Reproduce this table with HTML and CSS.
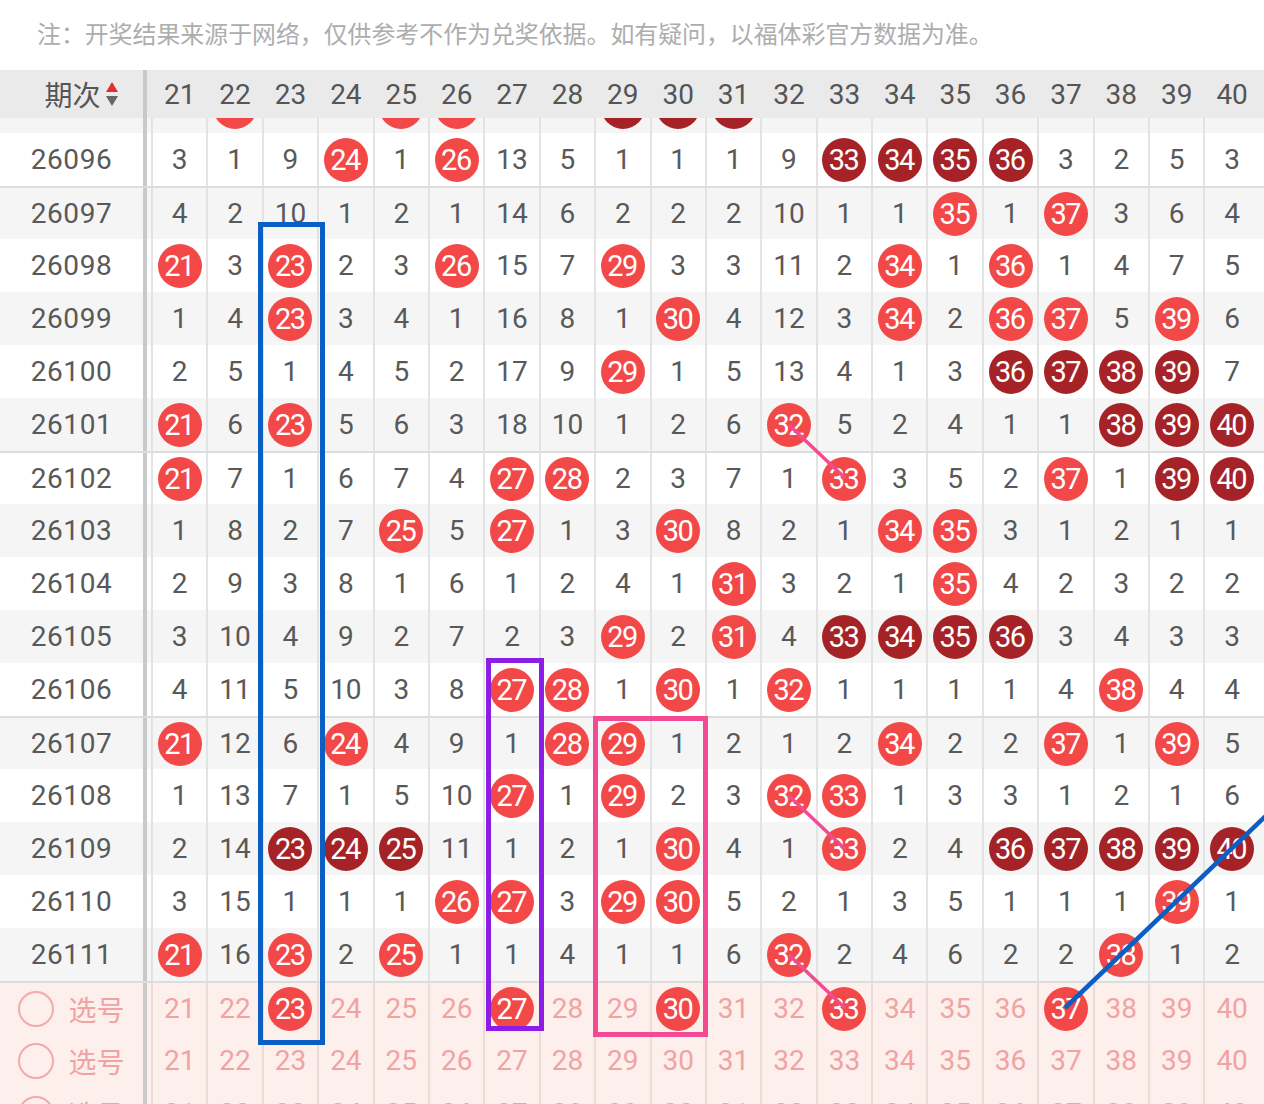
FILE: index.html
```html
<!DOCTYPE html>
<html lang="zh">
<head>
<meta charset="utf-8">
<title>走势图</title>
<link rel="stylesheet" href="styles.css">
</head>
<body>
<div class="page">
  <div class="note">注：开奖结果来源于网络，仅供参考不作为兑奖依据。如有疑问，以福体彩官方数据为准。</div>
  <div class="head">
    <div class="pcol hcol">期次<svg class="sort" width="14" height="28" viewBox="0 0 14 28"><polygon points="7,2 13,12 1,12" fill="#e52b2b"/><polygon points="1,16 13,16 7,26" fill="#666"/></svg></div>
    <span class="c">21</span><span class="c">22</span><span class="c">23</span><span class="c">24</span><span class="c">25</span><span class="c">26</span><span class="c">27</span><span class="c">28</span><span class="c">29</span><span class="c">30</span><span class="c">31</span><span class="c">32</span><span class="c">33</span><span class="c">34</span><span class="c">35</span><span class="c">36</span><span class="c">37</span><span class="c">38</span><span class="c">39</span><span class="c">40</span>
  </div>
  <div class="body">
    <div class="rows">
      <div class="row alt"><div class="pcol"></div><span class="c"></span><span class="c"><b class="b r"></b></span><span class="c"></span><span class="c"></span><span class="c"><b class="b r"></b></span><span class="c"><b class="b r"></b></span><span class="c"></span><span class="c"></span><span class="c"><b class="b d"></b></span><span class="c"><b class="b d"></b></span><span class="c"><b class="b d"></b></span><span class="c"></span><span class="c"></span><span class="c"></span><span class="c"></span><span class="c"></span><span class="c"></span><span class="c"></span><span class="c"></span><span class="c"></span></div>
      <div class="row"><div class="pcol">26096</div><span class="c">3</span><span class="c">1</span><span class="c">9</span><span class="c"><b class="b r">24</b></span><span class="c">1</span><span class="c"><b class="b r">26</b></span><span class="c">13</span><span class="c">5</span><span class="c">1</span><span class="c">1</span><span class="c">1</span><span class="c">9</span><span class="c"><b class="b d">33</b></span><span class="c"><b class="b d">34</b></span><span class="c"><b class="b d">35</b></span><span class="c"><b class="b d">36</b></span><span class="c">3</span><span class="c">2</span><span class="c">5</span><span class="c">3</span></div>
      <div class="row alt grp"><div class="pcol">26097</div><span class="c">4</span><span class="c">2</span><span class="c">10</span><span class="c">1</span><span class="c">2</span><span class="c">1</span><span class="c">14</span><span class="c">6</span><span class="c">2</span><span class="c">2</span><span class="c">2</span><span class="c">10</span><span class="c">1</span><span class="c">1</span><span class="c"><b class="b r">35</b></span><span class="c">1</span><span class="c"><b class="b r">37</b></span><span class="c">3</span><span class="c">6</span><span class="c">4</span></div>
      <div class="row"><div class="pcol">26098</div><span class="c"><b class="b r">21</b></span><span class="c">3</span><span class="c"><b class="b r">23</b></span><span class="c">2</span><span class="c">3</span><span class="c"><b class="b r">26</b></span><span class="c">15</span><span class="c">7</span><span class="c"><b class="b r">29</b></span><span class="c">3</span><span class="c">3</span><span class="c">11</span><span class="c">2</span><span class="c"><b class="b r">34</b></span><span class="c">1</span><span class="c"><b class="b r">36</b></span><span class="c">1</span><span class="c">4</span><span class="c">7</span><span class="c">5</span></div>
      <div class="row alt"><div class="pcol">26099</div><span class="c">1</span><span class="c">4</span><span class="c"><b class="b r">23</b></span><span class="c">3</span><span class="c">4</span><span class="c">1</span><span class="c">16</span><span class="c">8</span><span class="c">1</span><span class="c"><b class="b r">30</b></span><span class="c">4</span><span class="c">12</span><span class="c">3</span><span class="c"><b class="b r">34</b></span><span class="c">2</span><span class="c"><b class="b r">36</b></span><span class="c"><b class="b r">37</b></span><span class="c">5</span><span class="c"><b class="b r">39</b></span><span class="c">6</span></div>
      <div class="row"><div class="pcol">26100</div><span class="c">2</span><span class="c">5</span><span class="c">1</span><span class="c">4</span><span class="c">5</span><span class="c">2</span><span class="c">17</span><span class="c">9</span><span class="c"><b class="b r">29</b></span><span class="c">1</span><span class="c">5</span><span class="c">13</span><span class="c">4</span><span class="c">1</span><span class="c">3</span><span class="c"><b class="b d">36</b></span><span class="c"><b class="b d">37</b></span><span class="c"><b class="b d">38</b></span><span class="c"><b class="b d">39</b></span><span class="c">7</span></div>
      <div class="row alt"><div class="pcol">26101</div><span class="c"><b class="b r">21</b></span><span class="c">6</span><span class="c"><b class="b r">23</b></span><span class="c">5</span><span class="c">6</span><span class="c">3</span><span class="c">18</span><span class="c">10</span><span class="c">1</span><span class="c">2</span><span class="c">6</span><span class="c"><b class="b r">32</b></span><span class="c">5</span><span class="c">2</span><span class="c">4</span><span class="c">1</span><span class="c">1</span><span class="c"><b class="b d">38</b></span><span class="c"><b class="b d">39</b></span><span class="c"><b class="b d">40</b></span></div>
      <div class="row grp"><div class="pcol">26102</div><span class="c"><b class="b r">21</b></span><span class="c">7</span><span class="c">1</span><span class="c">6</span><span class="c">7</span><span class="c">4</span><span class="c"><b class="b r">27</b></span><span class="c"><b class="b r">28</b></span><span class="c">2</span><span class="c">3</span><span class="c">7</span><span class="c">1</span><span class="c"><b class="b r">33</b></span><span class="c">3</span><span class="c">5</span><span class="c">2</span><span class="c"><b class="b r">37</b></span><span class="c">1</span><span class="c"><b class="b d">39</b></span><span class="c"><b class="b d">40</b></span></div>
      <div class="row alt"><div class="pcol">26103</div><span class="c">1</span><span class="c">8</span><span class="c">2</span><span class="c">7</span><span class="c"><b class="b r">25</b></span><span class="c">5</span><span class="c"><b class="b r">27</b></span><span class="c">1</span><span class="c">3</span><span class="c"><b class="b r">30</b></span><span class="c">8</span><span class="c">2</span><span class="c">1</span><span class="c"><b class="b r">34</b></span><span class="c"><b class="b r">35</b></span><span class="c">3</span><span class="c">1</span><span class="c">2</span><span class="c">1</span><span class="c">1</span></div>
      <div class="row"><div class="pcol">26104</div><span class="c">2</span><span class="c">9</span><span class="c">3</span><span class="c">8</span><span class="c">1</span><span class="c">6</span><span class="c">1</span><span class="c">2</span><span class="c">4</span><span class="c">1</span><span class="c"><b class="b r">31</b></span><span class="c">3</span><span class="c">2</span><span class="c">1</span><span class="c"><b class="b r">35</b></span><span class="c">4</span><span class="c">2</span><span class="c">3</span><span class="c">2</span><span class="c">2</span></div>
      <div class="row alt"><div class="pcol">26105</div><span class="c">3</span><span class="c">10</span><span class="c">4</span><span class="c">9</span><span class="c">2</span><span class="c">7</span><span class="c">2</span><span class="c">3</span><span class="c"><b class="b r">29</b></span><span class="c">2</span><span class="c"><b class="b r">31</b></span><span class="c">4</span><span class="c"><b class="b d">33</b></span><span class="c"><b class="b d">34</b></span><span class="c"><b class="b d">35</b></span><span class="c"><b class="b d">36</b></span><span class="c">3</span><span class="c">4</span><span class="c">3</span><span class="c">3</span></div>
      <div class="row"><div class="pcol">26106</div><span class="c">4</span><span class="c">11</span><span class="c">5</span><span class="c">10</span><span class="c">3</span><span class="c">8</span><span class="c"><b class="b r">27</b></span><span class="c"><b class="b r">28</b></span><span class="c">1</span><span class="c"><b class="b r">30</b></span><span class="c">1</span><span class="c"><b class="b r">32</b></span><span class="c">1</span><span class="c">1</span><span class="c">1</span><span class="c">1</span><span class="c">4</span><span class="c"><b class="b r">38</b></span><span class="c">4</span><span class="c">4</span></div>
      <div class="row alt grp"><div class="pcol">26107</div><span class="c"><b class="b r">21</b></span><span class="c">12</span><span class="c">6</span><span class="c"><b class="b r">24</b></span><span class="c">4</span><span class="c">9</span><span class="c">1</span><span class="c"><b class="b r">28</b></span><span class="c"><b class="b r">29</b></span><span class="c">1</span><span class="c">2</span><span class="c">1</span><span class="c">2</span><span class="c"><b class="b r">34</b></span><span class="c">2</span><span class="c">2</span><span class="c"><b class="b r">37</b></span><span class="c">1</span><span class="c"><b class="b r">39</b></span><span class="c">5</span></div>
      <div class="row"><div class="pcol">26108</div><span class="c">1</span><span class="c">13</span><span class="c">7</span><span class="c">1</span><span class="c">5</span><span class="c">10</span><span class="c"><b class="b r">27</b></span><span class="c">1</span><span class="c"><b class="b r">29</b></span><span class="c">2</span><span class="c">3</span><span class="c"><b class="b r">32</b></span><span class="c"><b class="b r">33</b></span><span class="c">1</span><span class="c">3</span><span class="c">3</span><span class="c">1</span><span class="c">2</span><span class="c">1</span><span class="c">6</span></div>
      <div class="row alt"><div class="pcol">26109</div><span class="c">2</span><span class="c">14</span><span class="c"><b class="b d">23</b></span><span class="c"><b class="b d">24</b></span><span class="c"><b class="b d">25</b></span><span class="c">11</span><span class="c">1</span><span class="c">2</span><span class="c">1</span><span class="c"><b class="b r">30</b></span><span class="c">4</span><span class="c">1</span><span class="c"><b class="b r">33</b></span><span class="c">2</span><span class="c">4</span><span class="c"><b class="b d">36</b></span><span class="c"><b class="b d">37</b></span><span class="c"><b class="b d">38</b></span><span class="c"><b class="b d">39</b></span><span class="c"><b class="b d">40</b></span></div>
      <div class="row"><div class="pcol">26110</div><span class="c">3</span><span class="c">15</span><span class="c">1</span><span class="c">1</span><span class="c">1</span><span class="c"><b class="b r">26</b></span><span class="c"><b class="b r">27</b></span><span class="c">3</span><span class="c"><b class="b r">29</b></span><span class="c"><b class="b r">30</b></span><span class="c">5</span><span class="c">2</span><span class="c">1</span><span class="c">3</span><span class="c">5</span><span class="c">1</span><span class="c">1</span><span class="c">1</span><span class="c"><b class="b r">39</b></span><span class="c">1</span></div>
      <div class="row alt"><div class="pcol">26111</div><span class="c"><b class="b r">21</b></span><span class="c">16</span><span class="c"><b class="b r">23</b></span><span class="c">2</span><span class="c"><b class="b r">25</b></span><span class="c">1</span><span class="c">1</span><span class="c">4</span><span class="c">1</span><span class="c">1</span><span class="c">6</span><span class="c"><b class="b r">32</b></span><span class="c">2</span><span class="c">4</span><span class="c">6</span><span class="c">2</span><span class="c">2</span><span class="c"><b class="b r">38</b></span><span class="c">1</span><span class="c">2</span></div>
      <div class="row sel grp"><div class="pcol selp"><span class="ring"></span>选号</div><span class="c">21</span><span class="c">22</span><span class="c"><b class="b r">23</b></span><span class="c">24</span><span class="c">25</span><span class="c">26</span><span class="c"><b class="b r">27</b></span><span class="c">28</span><span class="c">29</span><span class="c"><b class="b r">30</b></span><span class="c">31</span><span class="c">32</span><span class="c"><b class="b r">33</b></span><span class="c">34</span><span class="c">35</span><span class="c">36</span><span class="c"><b class="b r">37</b></span><span class="c">38</span><span class="c">39</span><span class="c">40</span></div>
      <div class="row sel"><div class="pcol selp"><span class="ring"></span>选号</div><span class="c">21</span><span class="c">22</span><span class="c">23</span><span class="c">24</span><span class="c">25</span><span class="c">26</span><span class="c">27</span><span class="c">28</span><span class="c">29</span><span class="c">30</span><span class="c">31</span><span class="c">32</span><span class="c">33</span><span class="c">34</span><span class="c">35</span><span class="c">36</span><span class="c">37</span><span class="c">38</span><span class="c">39</span><span class="c">40</span></div>
      <div class="row sel"><div class="pcol selp"><span class="ring"></span>选号</div><span class="c">21</span><span class="c">22</span><span class="c">23</span><span class="c">24</span><span class="c">25</span><span class="c">26</span><span class="c">27</span><span class="c">28</span><span class="c">29</span><span class="c">30</span><span class="c">31</span><span class="c">32</span><span class="c">33</span><span class="c">34</span><span class="c">35</span><span class="c">36</span><span class="c">37</span><span class="c">38</span><span class="c">39</span><span class="c">40</span></div>
    </div>
  </div>
  <svg class="overlay" width="1264" height="1104" viewBox="0 0 1264 1104">
    <rect x="260.5" y="224.5" width="62" height="818" fill="none" stroke="#0b5fc4" stroke-width="5"/>
    <rect x="488.5" y="660.5" width="53" height="368" fill="none" stroke="#8d1de6" stroke-width="5"/>
    <rect x="595.5" y="718.5" width="110" height="316" fill="none" stroke="#f24a93" stroke-width="5"/>
    <line x1="789" y1="425" x2="845" y2="478" stroke="#f24a93" stroke-width="3.5"/>
    <line x1="789" y1="796" x2="845" y2="849" stroke="#f24a93" stroke-width="3.5"/>
    <line x1="789" y1="955" x2="845" y2="1008" stroke="#f24a93" stroke-width="3.5"/>
    <line x1="1065" y1="1008" x2="1270" y2="812" stroke="#0b5fc4" stroke-width="4.5"/>
  </svg>
</div>
</body>
</html>
```

FILE: styles.css
```css
html, body {
  margin: 0;
  padding: 0;
  overflow: hidden;
  background: #fff;
}

.page {
  position: relative;
  width: 1264px;
  height: 1104px;
  overflow: hidden;
  font-family: Roboto, "Noto Sans CJK SC", sans-serif;
  color: #595959;
}

.note {
  height: 70px;
  padding-left: 37px;
  font-family: "Noto Sans CJK SC", sans-serif;
  font-size: 23.9px;
  line-height: 66px;
  color: #adadad;
  white-space: nowrap;
}

.head {
  display: flex;
  height: 48px;
  background: #eaeaea;
}

.pcol {
  flex: none;
  width: 143px;
  height: 100%;
  border-right: 4px solid #c9c9c9;
  margin-right: 4px;
  display: flex;
  align-items: center;
  justify-content: center;
  font-size: 28px;
  letter-spacing: 0.6px;
}

.hcol {
  padding-left: 20px;
  width: 123px;
  font-family: "Noto Sans CJK SC", sans-serif;
  letter-spacing: 0;
  color: #555;
}

.sort {
  margin-left: 4px;
}

.c {
  flex: none;
  width: 55.4px;
  height: 100%;
  box-sizing: border-box;
  border-left: 2px solid #e3e3e3;
  display: flex;
  align-items: center;
  justify-content: center;
  font-size: 28px;
}

.head .c {
  border-left-color: transparent;
  color: #555;
}

.body {
  height: 986px;
  overflow: hidden;
}

.rows {
  margin-top: -38px;
}

.row {
  display: flex;
  height: 53px;
  box-sizing: border-box;
  background: #fff;
}

.row.alt {
  background: #f5f5f5;
}

.row.grp {
  border-top: 2px solid #dddddd;
}

.row.sel {
  background: #fdefeb;
}

.row.sel .c {
  color: #f1a3a3;
  border-left-color: #ebdcd8;
}

.selp {
  font-family: "Noto Sans CJK SC", sans-serif;
  color: #f1a3a3;
  letter-spacing: 0;
}

.ring {
  width: 32px;
  height: 32px;
  border: 2px solid #f2aaaa;
  border-radius: 50%;
  margin-right: 14px;
}

.b {
  width: 44px;
  height: 44px;
  border-radius: 50%;
  display: flex;
  align-items: center;
  justify-content: center;
  color: #fff;
  font-weight: normal;
  font-size: 29px;
  letter-spacing: -1.5px;
  text-indent: -1.5px;
}

.b.r {
  background: #f34848;
}

.b.d {
  background: #a52326;
}

.overlay {
  position: absolute;
  left: 0;
  top: 0;
  pointer-events: none;
}
```
